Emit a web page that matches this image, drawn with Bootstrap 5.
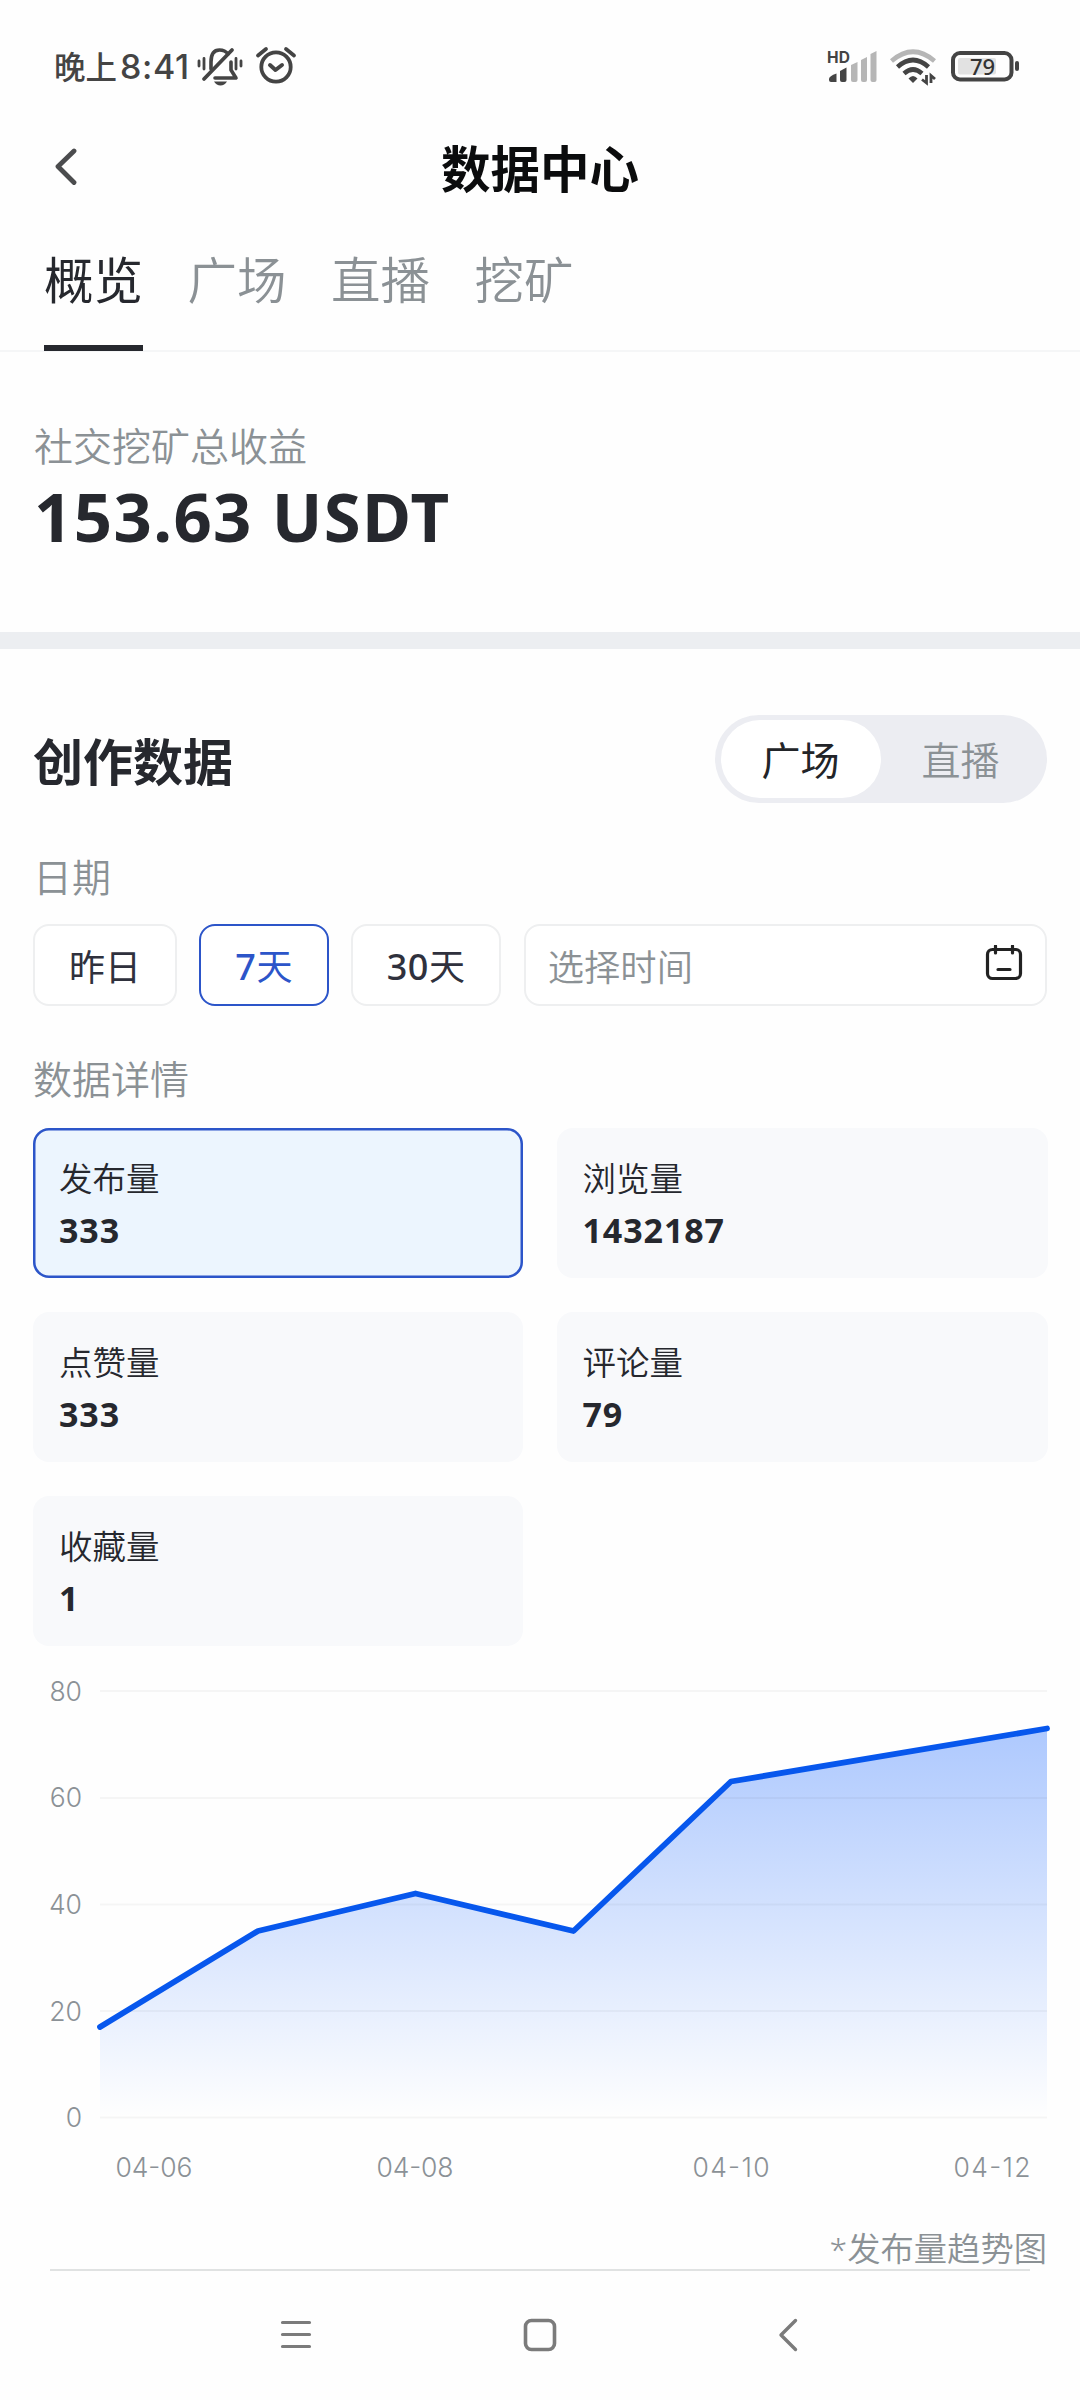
<!DOCTYPE html>
<html lang="zh-CN">
<head>
<meta charset="utf-8">
<meta name="viewport" content="width=device-width, initial-scale=1">
<title>数据中心</title>
<link rel="stylesheet" href="https://cdn.jsdelivr.net/npm/bootstrap@5.3.0/dist/css/bootstrap.min.css">
<style>
  :root { --ink:#26282e; --muted:#8b9195; --blue:#2c55c9; }
  body { width:1080px; height:2400px; overflow:hidden; background:#fefefe; color:var(--ink);
    font-family:"Noto Sans CJK SC","Noto Sans",sans-serif; line-height:1; }
  svg { display:block; flex:none; }
  .status-bar { height:118px; padding:21px 60px 0 54px; color:#444; }
  .clock { font-size:31.5px; line-height:40px; font-weight:500; width:141px; }
  .clock span { font-family:Inter,sans-serif; font-size:34px; margin-left:3px; letter-spacing:.6px; }
  .title-bar { height:100px; padding:0 0 3px 54px; }
  .title-bar h1 { font-size:49.5px; line-height:60px; font-weight:700; color:#0b0c0d; margin-left:363px; }
  .tab-strip { height:134px; padding-left:44px; gap:44.5px; border-bottom:2px solid #f5f6f7; }
  .tab-strip .nav-link { padding:0; width:99px; height:133px; font-size:49.5px; line-height:120px; color:var(--muted); font-weight:350; white-space:nowrap; border-radius:0; }
  .tab-strip .nav-link.active { color:var(--ink); font-weight:400; border-bottom:6px solid var(--ink); background:none; }
  .income { height:280px; padding:72px 34px 0; }
  .field-label { font-size:39px; line-height:40px; color:var(--muted); font-weight:350; margin:0; }
  .total { font-family:"Noto Sans",sans-serif; font-weight:700; font-size:67px; line-height:80px; letter-spacing:1.4px; margin:12px 0 0; white-space:nowrap; }
  .band { height:17px; background:#eceef1; }
  .creation { padding:66px 33.5px 0 33px; }
  .creation h2 { font-size:50px; line-height:60px; font-weight:700; margin:0; }
  .switcher { width:332px; height:88px; padding:5px 6px; background:#ecedf2; font-size:39px; }
  .switcher .nav-link { width:160px; height:78px; padding:0; border-radius:39px; color:var(--muted); line-height:76px; font-weight:350; text-align:center; }
  .switcher .nav-link.active { background:#fff; color:#222428; font-weight:400; }
  .label-date { margin-top:52px; }
  .label-detail { margin-top:51px; }
  .date-row { height:82px; gap:22px; margin-top:29px; }
  .chip { height:82px; border:2.5px solid #eeeff0; border-radius:16px; background:#fff; font-size:36px; line-height:75px; padding:0; color:#2f313d; }
  .chip b { font-family:"Noto Sans",sans-serif; font-weight:500; letter-spacing:.5px; }
  .chip-on { border-color:var(--blue); color:var(--blue); }
  .picker { width:523px; padding:0 21px 0 22px; color:var(--muted); font-weight:350; font-size:36.3px; margin-left:1px; }
  .stats { display:grid; grid-template-columns:490px 491px; column-gap:33.5px; row-gap:34px; margin-top:31px; }
  .stat { height:150px; border-radius:16px; background:#f8f9fb; padding:31px 25px 0 26px; border:0; }
  .stat-on { background:#ecf5fe; box-shadow:inset 0 0 0 2.5px var(--blue); }
  .stat dt { font-size:33.5px; line-height:36px; font-weight:350; }
  .stat dd { font-family:"Noto Sans",sans-serif; font-weight:700; font-size:34px; line-height:36px; letter-spacing:.9px; margin:17px 0 0; }
  .chart text { font-family:Inter,sans-serif; font-weight:300; font-size:26.5px; fill:#8b9196; }
  .caption { font-size:33.3px; line-height:40px; color:var(--muted); font-weight:350; height:42px; padding-right:33px; }
  .caption span { font-family:"Noto Sans",sans-serif; font-size:32px; }
  .sys-nav { height:130px; margin:0 50px; border-top:2px solid #e0e2e2; padding:47px 0 0 230px; }
</style>
<script src="https://cdn.jsdelivr.net/npm/bootstrap@5.3.0/dist/js/bootstrap.bundle.min.js"></script>
</head>
<body>
<header>
  <div class="status-bar d-flex align-items-start justify-content-between">
    <div class="d-flex align-items-start pt-4">
      <div class="clock text-nowrap">晚上<span>8:41</span></div>
      <svg width="50" height="42" viewBox="195 45 50 42" fill="none" stroke="#444" stroke-width="3.6" stroke-linecap="round" stroke-linejoin="round">
        <path d="M211 69V62Q211 50 219.500 50Q225 50 228 54M231 62V70L236 78H215"/>
        <path d="M204 79L232 50" stroke-width="3.800"/>
        <path d="M199 61V66M204 58.500V69M236 58.500V69M241 61V66" stroke-width="2.800"/>
        <path d="M214 81.500H227Q224.500 85.500 220.500 85.500T214 81.500Z" fill="#444" stroke="none"/>
      </svg>
      <svg class="ms-2" width="48" height="42" viewBox="251 45 48 42" fill="none" stroke="#444" stroke-linecap="round" stroke-linejoin="round">
        <circle cx="274" cy="67" r="14.700" stroke-width="3.800"/>
        <path d="M268 65L273.500 70L280 65" stroke-width="4"/>
        <path d="M256 55.500L264 49M284 49L292 55.500" stroke-width="3.800"/>
      </svg>
    </div>
    <svg class="mt-4" width="196" height="42" viewBox="824 45 196 42">
      <text x="827" y="62.500" font-family="Inter" font-size="15.500" font-weight="700" fill="#444" textLength="23">HD</text>
      <g fill="#444"><path d="M829 79Q829 76 836.500 73.500V82H831Q829 82 829 80Z"/><path d="M840 71L846.500 67.500V80Q846.500 82 844.500 82H842Q840 82 840 80Z"/></g>
      <g fill="#b6b6b6"><path d="M851 65L857.500 62V80Q857.500 82 855.500 82H853Q851 82 851 80Z"/><path d="M861 60L867 57V80Q867 82 865 82H863Q861 82 861 80Z"/><path d="M870.500 54L876.500 51V80Q876.500 82 874.500 82H872.500Q870.500 82 870.500 80Z"/></g>
      <g fill="none" stroke-width="4.600">
        <path d="M891.500 61Q913 42.500 934.500 61" stroke="#b6b6b6"/>
        <path d="M897.500 67Q913 53 928.500 67" stroke="#444"/>
        <path d="M904 73.500Q913 65.500 922 73.500" stroke="#444"/>
      </g>
      <path d="M908.500 78.500Q913 73.500 917.500 78.500L913 83Z" fill="#444"/>
      <path d="M926.500 75V83L922 79.500M931 83V75.500L935 79" fill="none" stroke="#444" stroke-width="2.800"/>
      <rect x="953" y="53" width="58.500" height="26.500" rx="7" fill="none" stroke="#444" stroke-width="4"/>
      <rect x="958" y="58" width="38" height="16.500" rx="2" fill="#e2e2e2"/>
      <rect x="1015" y="61" width="4" height="10" rx="2" fill="#444"/>
      <text x="970" y="74.500" font-family="Noto Sans" font-size="22" font-weight="500" fill="#333">79</text>
    </svg>
  </div>
  <div class="title-bar d-flex align-items-center">
    <svg width="24" height="38" viewBox="0 0 24 38" fill="none" stroke="#4b4c4e" stroke-width="4.800" stroke-linejoin="round" stroke-linecap="round"><path d="M20 3L4 18.500L20 34.500"/></svg>
    <h1 class="mb-0">数据中心</h1>
  </div>
  <nav class="nav tab-strip flex-nowrap">
    <a class="nav-link active">概览</a><a class="nav-link">广场</a><a class="nav-link">直播</a><a class="nav-link">挖矿</a>
  </nav>
</header>
<main>
  <section class="income">
    <p class="field-label">社交挖矿总收益</p>
    <p class="total">153.63 USDT</p>
  </section>
  <div class="band"></div>
  <section class="creation">
    <div class="d-flex align-items-center justify-content-between">
      <h2>创作数据</h2>
      <nav class="nav switcher rounded-pill flex-nowrap">
        <a class="nav-link active">广场</a><a class="nav-link">直播</a>
      </nav>
    </div>
    <p class="field-label label-date">日期</p>
    <div class="date-row d-flex">
      <button class="chip" style="width:144px">昨日</button>
      <button class="chip chip-on" style="width:130px"><b>7</b>天</button>
      <button class="chip" style="width:150px"><b>30</b>天</button>
      <div class="chip picker d-flex justify-content-between align-items-center">
        <span>选择时间</span>
        <svg width="40" height="40" viewBox="983 947 40 40" fill="none" stroke="#222" stroke-width="3.2" stroke-linecap="round"><rect x="986.500" y="951.500" width="33" height="29" rx="5"/><path d="M994.500 948V955M1011.500 948V955M997 971.500H1009"/></svg>
      </div>
    </div>
    <p class="field-label label-detail">数据详情</p>
    <div class="stats">
      <dl class="stat stat-on mb-0"><dt>发布量</dt><dd>333</dd></dl>
      <dl class="stat mb-0"><dt>浏览量</dt><dd>1432187</dd></dl>
      <dl class="stat mb-0"><dt>点赞量</dt><dd>333</dd></dl>
      <dl class="stat mb-0"><dt>评论量</dt><dd>79</dd></dl>
      <dl class="stat mb-0"><dt>收藏量</dt><dd>1</dd></dl>
    </div>
  </section>
  <svg class="chart" width="1080" height="581" viewBox="0 1646 1080 581">
    <defs><linearGradient id="fade" x1="0" y1="0" x2="0" y2="1"><stop offset="0" stop-color="#0a5cff" stop-opacity=".33"/><stop offset="1" stop-color="#0a5cff" stop-opacity="0"/></linearGradient></defs>
    <path d="M100 2027L258 1931L415.500 1893.500L573.500 1931L731 1781.500L1047 1728.500V2117.500H100Z" fill="url(#fade)"/>
    <path d="M100 1691H1047M100 1798H1047M100 1904.500H1047M100 2011H1047M100 2117.500H1047" stroke="#000" stroke-opacity=".035" stroke-width="2"/>
    <path d="M100 2027L258 1931L415.500 1893.500L573.500 1931L731 1781.500L1047 1728.500" fill="none" stroke="#0757ed" stroke-width="5.800" stroke-linecap="round" stroke-linejoin="round"/>
    <g text-anchor="end"><text x="82" y="1700.500">80</text><text x="82" y="1807">60</text><text x="82" y="1914">40</text><text x="82" y="2020.500">20</text><text x="82" y="2127">0</text></g>
    <g text-anchor="middle"><text x="154" y="2176.500" textLength="77">04-06</text><text x="415" y="2176.500" textLength="77">04-08</text><text x="731" y="2176.500" textLength="77">04-10</text><text x="992" y="2176.500" textLength="77">04-12</text></g>
  </svg>
  <div class="caption text-end"><span>*</span>发布量趋势图</div>
</main>
<footer class="sys-nav d-flex align-items-start">
  <svg width="32" height="34" viewBox="280 2318 32 34" stroke="#7b7b7b" stroke-width="3.200" stroke-linecap="round"><path d="M282.500 2322.500H309.500M282.500 2334.500H309.500M282.500 2346.500H309.500"/></svg>
  <svg style="margin-left:211px" width="34" height="34" viewBox="523 2318 34 34" fill="none" stroke="#7b7b7b" stroke-width="3.600"><rect x="525.500" y="2320.500" width="29" height="29" rx="6"/></svg>
  <svg style="margin-left:221px" width="22" height="34" viewBox="778 2318 22 34" fill="none" stroke="#7b7b7b" stroke-width="3.400" stroke-linecap="round" stroke-linejoin="round"><path d="M795.500 2320.500L781 2335L795.500 2349.500"/></svg>
</footer>
</body>
</html>
